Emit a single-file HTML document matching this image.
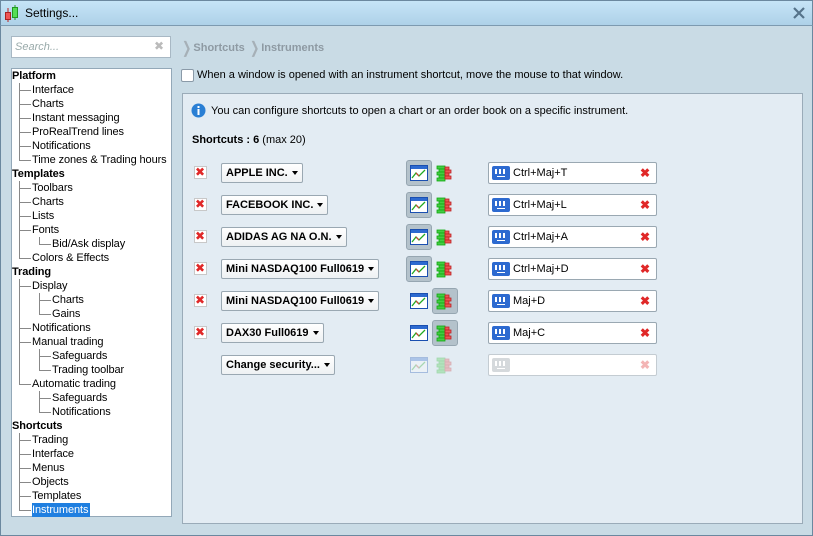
<!DOCTYPE html>
<html><head><meta charset="utf-8"><style>
*{margin:0;padding:0;box-sizing:border-box}
body{width:813px;height:536px;overflow:hidden;font-family:"Liberation Sans",Arial,sans-serif;font-size:11px;color:#000;background:#c9dbe5;position:relative}
.win{position:absolute;left:0;top:0;width:813px;height:536px;box-shadow:inset 0 0 0 1px #6b889f;background:#c9dbe5}
.title{position:absolute;left:0;top:0;width:813px;height:26px;background:linear-gradient(#c6e4f7,#aed1e8);border:1px solid #6b889f;border-bottom-color:#7d9ab0}
.title span{position:absolute;left:24px;top:5px;font-size:12px}
.a{position:absolute}
.search{left:11px;top:36px;width:160px;height:22px;background:#fff;border:1px solid #a8b8c4}
.search i{position:absolute;left:3px;top:4px;color:#9aa;font-style:italic}
.tree{left:11px;top:68px;width:161px;height:449px;background:#fff;border:1px solid #93a8b8}
.r{position:absolute;white-space:nowrap;line-height:14px;height:14px;letter-spacing:-0.1px}
.b{font-weight:bold;left:0px}
.l1{left:20px}.l2{left:40px}
.h{position:absolute;height:1px;background:#888}
.v{position:absolute;width:1px;background:#888}
.sel{background:#1f7fe0;color:#fff;padding-right:2px}
.bc{left:180px;top:38px;color:#8e9aa3;font-weight:bold;font-size:11px}
.bc s{text-decoration:none;font-size:16px;vertical-align:-2px;color:#a6b0b7;font-weight:normal;transform:scaleX(.7);display:inline-block}
.panel{left:182px;top:93px;width:621px;height:431px;background:#e3ecf3;border:1px solid #9aabb8}
.cb{left:181px;top:69px;width:13px;height:13px;background:#fff;border:1px solid #8a9aa8;border-radius:2px}
.dx{position:absolute;width:13px;height:13px;background:#fff;border:1px solid #c8c8c8}
.dx:after{content:"✖";position:absolute;left:0px;top:-2px;color:#e02828;font-size:12px;line-height:14px}
.dd{position:absolute;height:20px;background:linear-gradient(#fff,#eef1f3);border:1px solid #9aa8b2;border-radius:2px;font-weight:bold;padding:3px 4px;white-space:nowrap}
.dd:after{content:"";display:inline-block;margin-left:4px;border:3.5px solid transparent;border-top:4px solid #000;vertical-align:-2px}
.cbtn{position:absolute;width:26px;height:26px;background:#b4c2cb;border:1px solid #96a6b1;border-radius:3px}
.fld{position:absolute;left:488px;width:169px;height:22px;background:#fff;border:1px solid #9aa8b2;border-radius:2px}
.fld span{position:absolute;left:24px;top:4px}
.kb{position:absolute;left:3px;top:3px;width:18px;height:14px;background:#2d6ad0;border-radius:2px}
.kb:after{content:"";position:absolute;left:3px;top:3px;width:12px;height:5px;background:repeating-linear-gradient(90deg,#fff 0 2px,transparent 2px 4px)}
.kb:before{content:"";position:absolute;left:5px;top:10px;width:8px;height:1px;background:#fff}
.fx{position:absolute;right:6px;top:3px;color:#e02828;font-size:12px}
.dim{opacity:.3}
</style></head><body><div class="win">
<div class="title"><svg class="a" style="left:3px;top:3px" width="16" height="18"><line x1="4" y1="4" x2="4" y2="18" stroke="#b22"/><rect x="1.5" y="8.5" width="5" height="7" fill="#e55" stroke="#a22"/><line x1="11" y1="1" x2="11" y2="16" stroke="#292"/><rect x="8.5" y="3.5" width="5" height="10" fill="#5d5" stroke="#292"/></svg><span>Settings...</span>
<svg class="a" style="left:792px;top:6px" width="12" height="12"><path d="M1 1L11 11M11 1L1 11" stroke="#55738a" stroke-width="2.2"/></svg></div>
<div class="a search"><i>Search...</i><span class="a" style="left:142px;top:2px;color:#bbb;font-size:12px">✖</span></div>
<div class="a bc"><s>❯</s>Shortcuts <s>❯</s>Instruments</div>
<div class="a tree">
<div class="v" style="left:7px;top:14px;height:78px"></div>
<div class="v" style="left:7px;top:112px;height:78px"></div>
<div class="v" style="left:27px;top:168px;height:8px"></div>
<div class="v" style="left:7px;top:210px;height:106px"></div>
<div class="v" style="left:27px;top:224px;height:22px"></div>
<div class="v" style="left:27px;top:280px;height:22px"></div>
<div class="v" style="left:27px;top:322px;height:22px"></div>
<div class="v" style="left:7px;top:364px;height:78px"></div>
<div class="h" style="left:7px;width:12px;top:21px"></div><div class="h" style="left:7px;width:12px;top:35px"></div><div class="h" style="left:7px;width:12px;top:49px"></div><div class="h" style="left:7px;width:12px;top:63px"></div><div class="h" style="left:7px;width:12px;top:77px"></div><div class="h" style="left:7px;width:12px;top:91px"></div>
<div class="h" style="left:7px;width:12px;top:119px"></div><div class="h" style="left:7px;width:12px;top:133px"></div><div class="h" style="left:7px;width:12px;top:147px"></div><div class="h" style="left:7px;width:12px;top:161px"></div><div class="h" style="left:27px;width:12px;top:175px"></div><div class="h" style="left:7px;width:12px;top:189px"></div>
<div class="h" style="left:7px;width:12px;top:217px"></div><div class="h" style="left:27px;width:12px;top:231px"></div><div class="h" style="left:27px;width:12px;top:245px"></div><div class="h" style="left:7px;width:12px;top:259px"></div><div class="h" style="left:7px;width:12px;top:273px"></div><div class="h" style="left:27px;width:12px;top:287px"></div><div class="h" style="left:27px;width:12px;top:301px"></div><div class="h" style="left:7px;width:12px;top:315px"></div><div class="h" style="left:27px;width:12px;top:329px"></div><div class="h" style="left:27px;width:12px;top:343px"></div>
<div class="h" style="left:7px;width:12px;top:371px"></div><div class="h" style="left:7px;width:12px;top:385px"></div><div class="h" style="left:7px;width:12px;top:399px"></div><div class="h" style="left:7px;width:12px;top:413px"></div><div class="h" style="left:7px;width:12px;top:427px"></div><div class="h" style="left:7px;width:12px;top:441px"></div>
<div class="r b" style="top:0">Platform</div>
<div class="r l1" style="top:14px">Interface</div>
<div class="r l1" style="top:28px">Charts</div>
<div class="r l1" style="top:42px">Instant messaging</div>
<div class="r l1" style="top:56px">ProRealTrend lines</div>
<div class="r l1" style="top:70px">Notifications</div>
<div class="r l1" style="top:84px">Time zones &amp; Trading hours</div>
<div class="r b" style="top:98px">Templates</div>
<div class="r l1" style="top:112px">Toolbars</div>
<div class="r l1" style="top:126px">Charts</div>
<div class="r l1" style="top:140px">Lists</div>
<div class="r l1" style="top:154px">Fonts</div>
<div class="r l2" style="top:168px">Bid/Ask display</div>
<div class="r l1" style="top:182px">Colors &amp; Effects</div>
<div class="r b" style="top:196px">Trading</div>
<div class="r l1" style="top:210px">Display</div>
<div class="r l2" style="top:224px">Charts</div>
<div class="r l2" style="top:238px">Gains</div>
<div class="r l1" style="top:252px">Notifications</div>
<div class="r l1" style="top:266px">Manual trading</div>
<div class="r l2" style="top:280px">Safeguards</div>
<div class="r l2" style="top:294px">Trading toolbar</div>
<div class="r l1" style="top:308px">Automatic trading</div>
<div class="r l2" style="top:322px">Safeguards</div>
<div class="r l2" style="top:336px">Notifications</div>
<div class="r b" style="top:350px">Shortcuts</div>
<div class="r l1" style="top:364px">Trading</div>
<div class="r l1" style="top:378px">Interface</div>
<div class="r l1" style="top:392px">Menus</div>
<div class="r l1" style="top:406px">Objects</div>
<div class="r l1" style="top:420px">Templates</div>
<div class="r l1 sel" style="top:434px">Instruments</div>
</div>
<div class="a cb"></div>
<div class="a" style="left:197px;top:69px">When a window is opened with an instrument shortcut, move the mouse to that window.</div>
<div class="a panel"></div>
<svg class="a" style="left:191px;top:103px" width="15" height="15"><circle cx="7.5" cy="7.5" r="7" fill="#2a7fd4"/><rect x="6.5" y="6" width="2" height="6" fill="#fff"/><rect x="6.5" y="3" width="2" height="2" fill="#fff"/></svg>
<div class="a" style="left:211px;top:105px">You can configure shortcuts to open a chart or an order book on a specific instrument.</div>
<div class="a" style="left:192px;top:134px"><b>Shortcuts : 6</b> (max 20)</div>

<svg width="0" height="0" style="position:absolute"><defs>
<g id="ch"><rect x="0.5" y="0.5" width="17" height="15" fill="#fff" stroke="#1a4fb0"/><rect x="1" y="1" width="16" height="3" fill="#2d6ad0"/><polyline points="2,13 6,8 9,11 15,5" fill="none" stroke="#2a2" stroke-width="1.3"/><polyline points="6,8 9,11" stroke="#d33" fill="none"/></g>
<g id="ob"><rect x="1" y="1" width="8" height="3" fill="#4c4" stroke="#1a1" stroke-width=".8"/><rect x="3" y="4" width="6" height="3" fill="#4c4" stroke="#1a1" stroke-width=".8"/><rect x="1" y="7" width="8" height="3" fill="#4c4" stroke="#1a1" stroke-width=".8"/><rect x="3" y="10" width="6" height="3" fill="#4c4" stroke="#1a1" stroke-width=".8"/><rect x="1" y="13" width="8" height="3" fill="#4c4" stroke="#1a1" stroke-width=".8"/><rect x="9" y="2" width="4" height="3" fill="#e55" stroke="#b22" stroke-width=".8"/><rect x="9" y="5" width="6" height="3" fill="#e55" stroke="#b22" stroke-width=".8"/><rect x="9" y="8" width="4" height="3" fill="#e55" stroke="#b22" stroke-width=".8"/><rect x="9" y="11" width="6" height="3" fill="#e55" stroke="#b22" stroke-width=".8"/></g>
</defs></svg>

<div class="dx" style="left:194px;top:166px"></div><div class="dd" style="left:221px;top:163px">APPLE INC.</div>
<div class="cbtn" style="left:406px;top:160px"></div><svg class="a" style="left:410px;top:165px" width="18" height="17"><use href="#ch"/></svg><svg class="a" style="left:436px;top:165px" width="17" height="17"><use href="#ob"/></svg>
<div class="fld" style="top:162px"><div class="kb"></div><span>Ctrl+Maj+T</span><b class="fx">✖</b></div>

<div class="dx" style="left:194px;top:198px"></div><div class="dd" style="left:221px;top:195px">FACEBOOK INC.</div>
<div class="cbtn" style="left:406px;top:192px"></div><svg class="a" style="left:410px;top:197px" width="18" height="17"><use href="#ch"/></svg><svg class="a" style="left:436px;top:197px" width="17" height="17"><use href="#ob"/></svg>
<div class="fld" style="top:194px"><div class="kb"></div><span>Ctrl+Maj+L</span><b class="fx">✖</b></div>

<div class="dx" style="left:194px;top:230px"></div><div class="dd" style="left:221px;top:227px">ADIDAS AG NA O.N.</div>
<div class="cbtn" style="left:406px;top:224px"></div><svg class="a" style="left:410px;top:229px" width="18" height="17"><use href="#ch"/></svg><svg class="a" style="left:436px;top:229px" width="17" height="17"><use href="#ob"/></svg>
<div class="fld" style="top:226px"><div class="kb"></div><span>Ctrl+Maj+A</span><b class="fx">✖</b></div>

<div class="dx" style="left:194px;top:262px"></div><div class="dd" style="left:221px;top:259px">Mini NASDAQ100 Full0619</div>
<div class="cbtn" style="left:406px;top:256px"></div><svg class="a" style="left:410px;top:261px" width="18" height="17"><use href="#ch"/></svg><svg class="a" style="left:436px;top:261px" width="17" height="17"><use href="#ob"/></svg>
<div class="fld" style="top:258px"><div class="kb"></div><span>Ctrl+Maj+D</span><b class="fx">✖</b></div>

<div class="dx" style="left:194px;top:294px"></div><div class="dd" style="left:221px;top:291px">Mini NASDAQ100 Full0619</div>
<div class="cbtn" style="left:432px;top:288px"></div><svg class="a" style="left:410px;top:293px" width="18" height="17"><use href="#ch"/></svg><svg class="a" style="left:436px;top:293px" width="17" height="17"><use href="#ob"/></svg>
<div class="fld" style="top:290px"><div class="kb"></div><span>Maj+D</span><b class="fx">✖</b></div>

<div class="dx" style="left:194px;top:326px"></div><div class="dd" style="left:221px;top:323px">DAX30 Full0619</div>
<div class="cbtn" style="left:432px;top:320px"></div><svg class="a" style="left:410px;top:325px" width="18" height="17"><use href="#ch"/></svg><svg class="a" style="left:436px;top:325px" width="17" height="17"><use href="#ob"/></svg>
<div class="fld" style="top:322px"><div class="kb"></div><span>Maj+C</span><b class="fx">✖</b></div>

<div class="dd" style="left:221px;top:355px">Change security...</div>
<svg class="a dim" style="left:410px;top:357px" width="18" height="17"><use href="#ch"/></svg><svg class="a dim" style="left:436px;top:357px" width="17" height="17"><use href="#ob"/></svg>
<div class="fld" style="top:354px;border-color:#c4ccd2"><div class="kb" style="background:#d5d9dc"></div><b class="fx" style="color:#f3b5b5">✖</b></div>
</div></body></html>
